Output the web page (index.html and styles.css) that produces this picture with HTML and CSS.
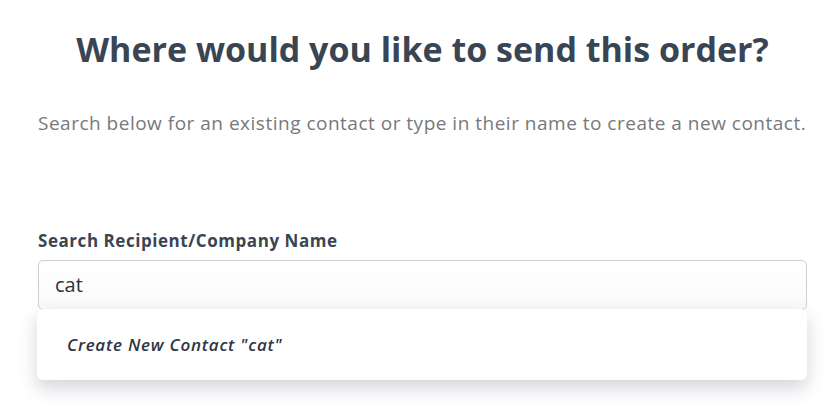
FILE: index.html
```html
<!DOCTYPE html>
<html>
<head>
<meta charset="utf-8">
<link rel="stylesheet" href="styles.css">
</head>
<body>
<div class="page">
  <h1 class="title">Where would you like to send this order?</h1>
  <p class="subtitle">Search below for an existing contact or type in their name to create a new contact.</p>
  <div class="field">
    <label class="label">Search Recipient/Company Name</label>
    <div class="combo">
      <div class="input">cat</div>
      <div class="menu">
        <div class="option">Create New Contact "cat"</div>
      </div>
    </div>
  </div>
</div>
</body>
</html>
```
FILE: styles.css
```css
html, body {
  margin: 0;
  padding: 0;
  background: #ffffff;
}
body {
  font-family: "Open Sans", "Noto Sans", sans-serif;
  height: 405px;
}
.page {
  width: 769px;
  margin-left: 38px;
  display: flex;
  flex-direction: column;
}
.title {
  margin: 27px 0 0 0;
  text-align: center;
  font-size: 34px;
  line-height: 44px;
  font-weight: 700;
  color: #394553;
}
.subtitle {
  margin: 40px 0 0 0;
  font-size: 19px;
  line-height: 24px;
  letter-spacing: 0.5px;
  color: #77787b;
  white-space: nowrap;
}
.field {
  margin-top: 96px;
  display: flex;
  flex-direction: column;
}
.label {
  font-size: 17px;
  line-height: 20px;
  letter-spacing: 0.55px;
  font-weight: 700;
  color: #394553;
}
.combo {
  margin-top: 9px;
  display: flex;
  flex-direction: column;
}
.input {
  height: 48px;
  border: 1px solid #cfcfcf;
  border-radius: 5px;
  padding: 0 16px;
  font-size: 20px;
  line-height: 48px;
  color: #2e3138;
  background: linear-gradient(#ffffff, #fafafa);
}
.menu {
  margin-top: -1px;
  margin-left: -1px;
  height: 71px;
  background: #ffffff;
  border-radius: 6px;
  box-shadow: 0 8px 18px rgba(60, 60, 90, 0.22);
  display: flex;
  align-items: center;
}
.option {
  padding-left: 30px;
  font-size: 17px;
  letter-spacing: 0.75px;
  font-style: italic;
  font-weight: 600;
  color: #2f3644;
}
```
